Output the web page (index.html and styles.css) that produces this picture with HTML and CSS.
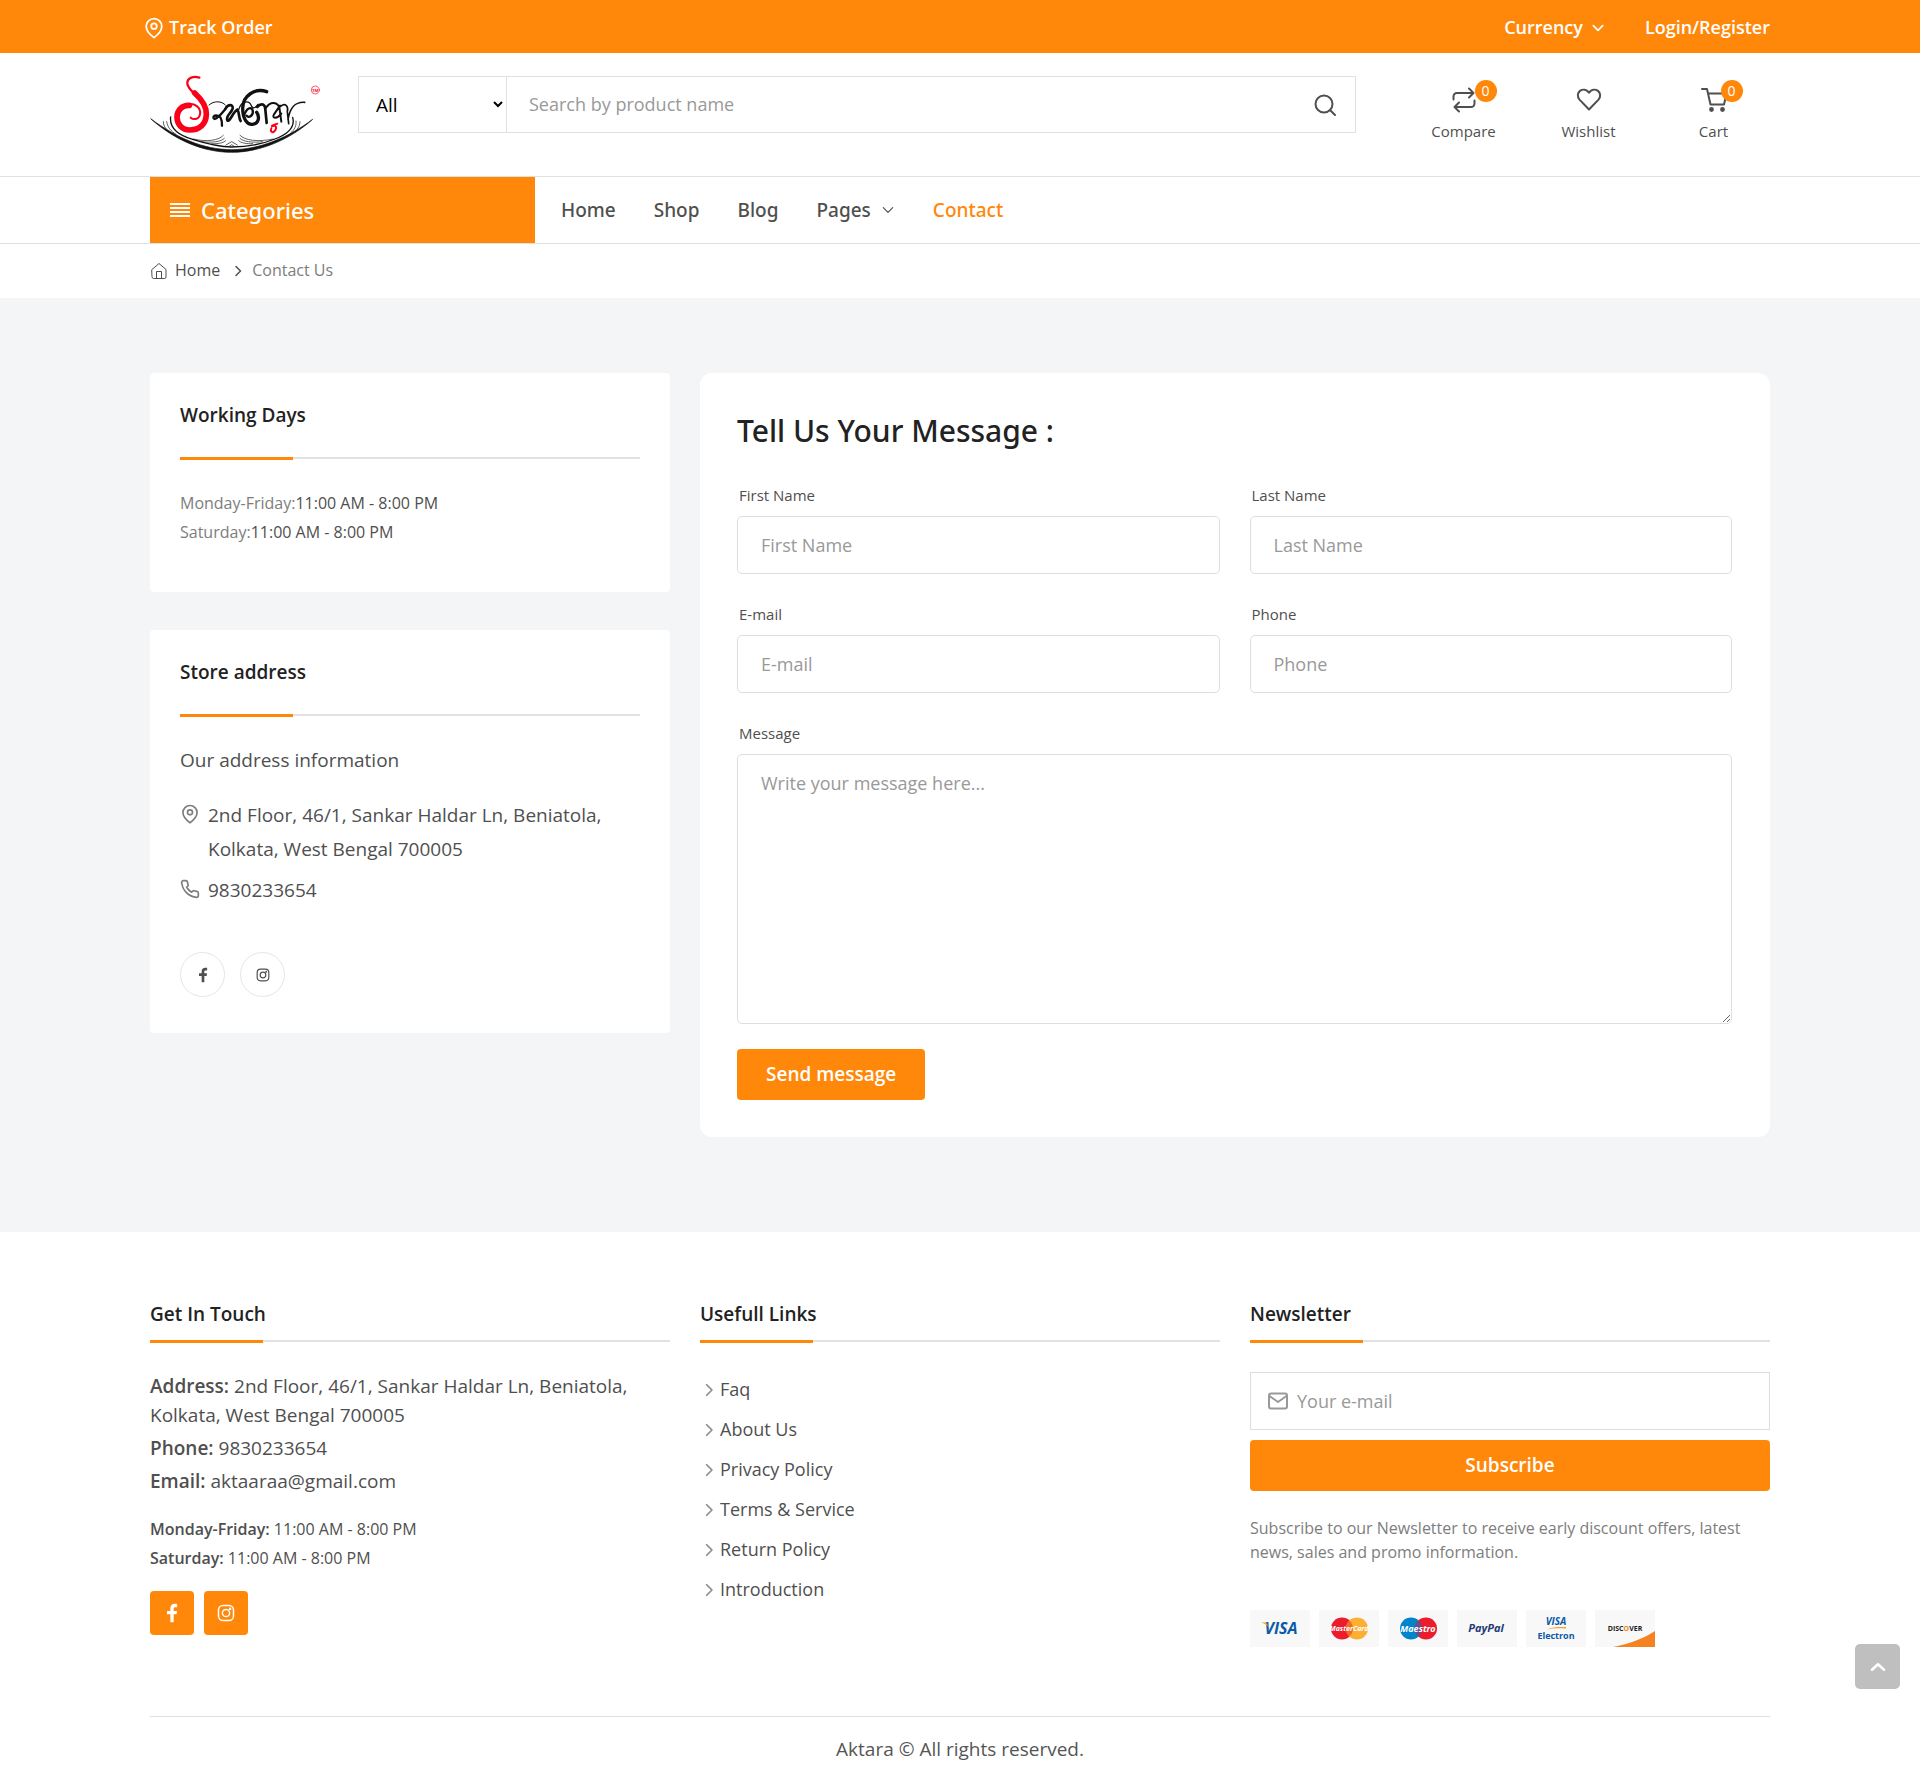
FILE: index.html
```html
<!DOCTYPE html>
<html lang="en">
<head>
<meta charset="utf-8">
<meta name="viewport" content="width=device-width, initial-scale=1">
<title>Contact Us - Aktara</title>
<link rel="stylesheet" href="styles.css">
</head>
<body>
<svg class="sprite" aria-hidden="true">
  <symbol id="pin" viewBox="0 0 24 24"><path d="M20.500 10.300c0 6-8.500 12.200-8.500 12.200S3.500 16.300 3.500 10.300a8.500 8.500 0 0 1 17 0z"/><circle cx="12" cy="10" r="3"/></symbol>
  <symbol id="down" viewBox="0 0 24 24"><path d="M4 8l8 8 8-8"/></symbol>
  <symbol id="right" viewBox="0 0 24 24"><path d="M8 3l9 9-9 9"/></symbol>
  <symbol id="facebook" viewBox="0 0 24 24"><path d="M14 23v-9.500h3.500l.5-4h-4V7.200c0-1.300.5-2 2-2h2.200V1.300C17.800 1.200 16.700 1 15.300 1 12 1 10 3 10 6.500v3H6v4h4V23z"/></symbol>
  <symbol id="instagram" viewBox="0 0 24 24"><rect x="2" y="2" width="20" height="20" rx="6"/><circle cx="12" cy="12" r="4.800"/><circle cx="17.500" cy="6.500" r=".7"/></symbol>
</svg>

<div class="topbar">
  <div class="wrap topbar-row">
    <a class="topbar-link" href="#"><svg class="icon icon-22"><use href="#pin"/></svg>Track Order</a>
    <div class="topbar-right">
      <button class="topbar-link currency" type="button">Currency <svg class="icon icon-14"><use href="#down"/></svg></button>
      <a class="topbar-link" href="#">Login/Register</a>
    </div>
  </div>
</div>

<header class="header">
  <div class="wrap header-row">
    <a class="logo" href="#" aria-label="Aktara">
      <svg viewBox="30 30 516 240">
        <g fill="none" stroke="#111" stroke-linecap="round">
          <path d="M33 162C105 226 190 262 275 262C360 262 450 224 518 163C448 216 360 254 275 254C190 254 110 218 33 162z" fill="#111" stroke-width="2"/>
          <path d="M92 156C88 188 112 210 160 224C205 238 240 246 275 246C320 246 370 236 405 222C448 206 466 186 458 157" stroke-width="4"/>
          <path d="M80 170C82 186 92 198 108 208M70 170c0 10 5 20 12 25M468 168c2 14-4 26-16 36M480 170c0 10-4 18-9 23" stroke-width="2"/>
          <path d="M160 222C200 232 238 226 250 211M185 230c30 4 60 0 68-10M215 236c18 1 36-2 42-9M400 222C352 232 314 226 300 211M368 230c-30 4-60 0-68-10M338 236c-18 1-36-2-42-9M258 240l17-10 17 10M268 244l7-5 7 5" stroke-width="2"/>
          <path d="M207 120C222 106 246 108 256 120" stroke-width="3"/>
          <path d="M246 182C246 166 242 152 232 152C222 150 216 158 224 162C236 158 246 144 256 132" stroke-width="7"/>
          <path d="M256 132C264 116 280 118 278 130C274 146 256 152 262 166C270 172 278 142 292 134C298 140 296 160 302 168" stroke-width="8"/>
          <path d="M296 134C304 108 326 104 334 122C340 136 350 124 354 118" stroke-width="4"/>
          <path d="M380 80C345 68 308 92 308 130C308 162 322 180 338 178C356 176 360 156 350 142" stroke-width="10"/>
          <path d="M312 152C320 128 334 124 338 136C342 150 326 162 320 152" stroke-width="7"/>
          <path d="M352 126C364 112 376 118 376 134L380 174" stroke-width="8"/>
          <path d="M378 128C392 110 408 110 418 126L424 170M420 122L402 148C394 162 412 162 424 146" stroke-width="6"/>
          <path d="M422 124C436 112 446 124 442 140L446 176M444 164C450 128 464 110 494 112" stroke-width="5"/>
        </g>
        <g fill="none" stroke="#fb0018" stroke-linecap="round">
          <path d="M178 38C162 32 141 38 142 56C144 72 160 82 176 98" stroke-width="7"/>
          <path d="M164 84C188 106 200 126 199 148C198 178 178 195 150 195C126 195 111 178 111 156C111 134 128 120 148 121" stroke-width="17"/>
          <path d="M140 119C164 112 184 128 180 148C178 162 162 166 152 158" stroke-width="6"/>
          <path d="M396 184C408 178 412 188 404 198C396 206 390 198 394 190M396 182l16-6" stroke-width="6"/>
          <circle cx="526" cy="75" r="12" stroke-width="2"/>
        </g>
        <text x="526" y="80" class="logo-tm">TM</text>
      </svg>
    </a>
    <form class="search">
      <select class="search-cat" aria-label="Category"><option>All</option></select>
      <input class="search-input" type="text" placeholder="Search by product name" aria-label="Search by product name">
      <button class="search-btn" type="button" aria-label="Search"><svg class="icon icon-24" viewBox="0 0 24 24"><circle cx="11" cy="11" r="8.500"/><path d="M17.200 17.200L22 22"/></svg></button>
    </form>
    <div class="actions">
      <a class="action" href="#"><span class="action-icon"><svg class="icon icon-26" viewBox="0 0 26 26"><path d="M2.500 12.500V9.500a3.500 3.500 0 0 1 3.500-3.500H22M18 1.500L22.500 6 18 10.500M23.500 13.500v3a3.500 3.500 0 0 1-3.500 3.500H4M8 15.500L3.500 20 8 24.500"/></svg><span class="badge">0</span></span>Compare</a>
      <a class="action" href="#"><span class="action-icon"><svg class="icon icon-26" viewBox="0 0 26 26"><path d="M13 22.500L3.500 12.600C1 9.800 1.500 5.800 4 3.900c2.800-2 6.600-1.400 9 1.700 2.400-3.100 6.200-3.700 9-1.700 2.500 1.900 3 5.900.5 8.700z"/></svg></span>Wishlist</a>
      <a class="action" href="#"><span class="action-icon"><svg class="icon icon-26" viewBox="0 0 26 26"><path d="M1 2h5l3.500 15.500h13.500L25.500 6.500H7.500"/><circle cx="10.500" cy="22.500" r="1.400" fill="currentColor"/><circle cx="21.500" cy="22.500" r="1.400" fill="currentColor"/></svg><span class="badge badge-cart">0</span></span>Cart</a>
    </div>
  </div>
</header>

<nav class="nav">
  <div class="wrap nav-row">
    <button class="categories" type="button"><svg class="icon" width="20" height="16" viewBox="0 0 20 16"><path d="M0 2h20M0 6h20M0 10h20M0 14h20"/></svg>Categories</button>
    <ul class="menu">
      <li><a href="#">Home</a></li>
      <li><a href="#">Shop</a></li>
      <li><a href="#">Blog</a></li>
      <li><a href="#">Pages <svg class="icon icon-14"><use href="#down"/></svg></a></li>
      <li><a class="active" href="#">Contact</a></li>
    </ul>
  </div>
</nav>

<div class="wrap crumbs">
  <a class="crumb-home" href="#"><svg class="icon icon-18" viewBox="0 0 18 18"><path d="M2 7.500L9 1.500l7 6V15a1.500 1.500 0 0 1-1.500 1.500h-11A1.500 1.500 0 0 1 2 15zM6.500 16.500V9.500h5v7"/></svg>Home</a>
  <svg class="icon crumb-sep"><use href="#right"/></svg>
  <span class="crumb-here">Contact Us</span>
</div>

<main class="main">
  <div class="wrap columns">
    <aside class="side">
      <section class="card">
        <h2 class="title card-title">Working Days</h2>
        <p class="hours"><span class="muted">Monday-Friday:</span>11:00 AM - 8:00 PM</p>
        <p class="hours"><span class="muted">Saturday:</span>11:00 AM - 8:00 PM</p>
      </section>
      <section class="card store">
        <h2 class="title card-title">Store address</h2>
        <p class="intro">Our address information</p>
        <p class="contact-line"><svg class="icon icon-20"><use href="#pin"/></svg><span>2nd Floor, 46/1, Sankar Haldar Ln, Beniatola, Kolkata, West Bengal 700005</span></p>
        <p class="contact-line"><svg class="icon icon-20" viewBox="0 0 24 24"><path d="M22 17v3a2 2 0 0 1-2.200 2A19.800 19.800 0 0 1 2 4.200 2 2 0 0 1 4 2h3a2 2 0 0 1 2 1.700c.1 1 .4 1.900.7 2.800a2 2 0 0 1-.5 2.100L8 9.900a16 16 0 0 0 6 6l1.300-1.300a2 2 0 0 1 2.100-.4c.9.3 1.800.6 2.800.7A2 2 0 0 1 22 17z"/></svg><span>9830233654</span></p>
        <div class="rounds">
          <a class="round" href="#" aria-label="Facebook"><svg class="solid icon-16"><use href="#facebook"/></svg></a>
          <a class="round" href="#" aria-label="Instagram"><svg class="icon icon-14"><use href="#instagram"/></svg></a>
        </div>
      </section>
    </aside>

    <form class="form">
      <h1 class="form-title">Tell Us Your Message :</h1>
      <div class="fields">
        <div class="field"><label for="first">First Name</label><input id="first" type="text" placeholder="First Name"></div>
        <div class="field"><label for="last">Last Name</label><input id="last" type="text" placeholder="Last Name"></div>
        <div class="field"><label for="email">E-mail</label><input id="email" type="email" placeholder="E-mail"></div>
        <div class="field"><label for="phone">Phone</label><input id="phone" type="tel" placeholder="Phone"></div>
        <div class="field wide"><label for="message">Message</label><textarea id="message" placeholder="Write your message here..."></textarea></div>
      </div>
      <button class="btn send" type="button">Send message</button>
    </form>
  </div>
</main>

<footer class="footer">
  <div class="wrap footer-cols">
    <section>
      <h2 class="title">Get In Touch</h2>
      <div class="touch">
        <p><b>Address:</b> 2nd Floor, 46/1, Sankar Haldar Ln, Beniatola, Kolkata, West Bengal 700005</p>
        <p><b>Phone:</b> 9830233654</p>
        <p><b>Email:</b> aktaaraa@gmail.com</p>
      </div>
      <p class="hours"><b>Monday-Friday:</b> 11:00 AM - 8:00 PM</p>
      <p class="hours"><b>Saturday:</b> 11:00 AM - 8:00 PM</p>
      <div class="squares">
        <a class="square" href="#" aria-label="Facebook"><svg class="solid icon-20"><use href="#facebook"/></svg></a>
        <a class="square" href="#" aria-label="Instagram"><svg class="icon icon-18"><use href="#instagram"/></svg></a>
      </div>
    </section>
    <section>
      <h2 class="title">Usefull Links</h2>
      <ul class="links">
        <li><a href="#"><svg class="icon icon-14"><use href="#right"/></svg>Faq</a></li>
        <li><a href="#"><svg class="icon icon-14"><use href="#right"/></svg>About Us</a></li>
        <li><a href="#"><svg class="icon icon-14"><use href="#right"/></svg>Privacy Policy</a></li>
        <li><a href="#"><svg class="icon icon-14"><use href="#right"/></svg>Terms &amp; Service</a></li>
        <li><a href="#"><svg class="icon icon-14"><use href="#right"/></svg>Return Policy</a></li>
        <li><a href="#"><svg class="icon icon-14"><use href="#right"/></svg>Introduction</a></li>
      </ul>
    </section>
    <section>
      <h2 class="title">Newsletter</h2>
      <form class="newsletter">
        <div class="mail-box">
          <svg class="icon icon-20" viewBox="0 0 20 20"><rect x="1" y="2.500" width="18" height="15" rx="2"/><path d="M1.500 5L10 11l8.500-6"/></svg>
          <input type="email" placeholder="Your e-mail" aria-label="Your e-mail">
        </div>
        <button class="btn" type="button">Subscribe</button>
      </form>
      <p class="note">Subscribe to our Newsletter to receive early discount offers, latest news, sales and promo information.</p>
      <div class="pays">
        <svg class="pay" viewBox="0 0 60 37" role="img"><text class="visa" x="31" y="24" font-size="16">VISA</text><path d="M11 12.500h5l4 6c-2-3-5-5-9-6z" fill="#f7a11a"/></svg>
        <svg class="pay" viewBox="0 0 60 37" role="img"><circle cx="23" cy="18.500" r="11" fill="#ea1c2d"/><circle cx="38" cy="18.500" r="11" fill="#fbb034"/><path d="M30.500 10.500a11 11 0 0 1 0 16 11 11 0 0 1 0-16z" fill="#f26a26"/><text class="mc" x="30" y="21" font-size="7">MasterCard</text></svg>
        <svg class="pay" viewBox="0 0 60 37" role="img"><circle cx="23" cy="18.500" r="11" fill="#0085ca"/><circle cx="38" cy="18.500" r="11" fill="#ea1c2d"/><path d="M30.500 10.500a11 11 0 0 1 0 16 11 11 0 0 1 0-16z" fill="#6b4c8c"/><text class="mc" x="30" y="22" font-size="9">Maestro</text></svg>
        <svg class="pay" viewBox="0 0 60 37" role="img"><text class="paypal" x="29" y="22" font-size="11">PayPal</text></svg>
        <svg class="pay" viewBox="0 0 60 37" role="img"><text class="visa" x="30" y="15" font-size="10">VISA</text><path d="M21 19.500c6-3 12-2.500 19-2.500v1.500c-7-.5-13-.5-19 1z" fill="#f7a11a"/><text class="electron" x="30" y="29" font-size="9">Electron</text></svg>
        <svg class="pay" viewBox="0 0 60 37" role="img"><path d="M18 37C34 34 50 28 60 21v16z" fill="#f58220"/><text class="discover" x="30" y="21" font-size="7">DISC<tspan fill="#f58220">O</tspan>VER</text></svg>
      </div>
    </section>
  </div>
  <div class="wrap"><p class="copyright">Aktara © All rights reserved.</p></div>
</footer>

<button class="to-top" type="button" aria-label="Back to top"><svg class="icon icon-16" viewBox="0 0 24 24"><path d="M3 16l9-8 9 8"/></svg></button>
</body>
</html>
```
FILE: styles.css
```css
*, *::before, *::after { box-sizing: border-box; }
:root {
  --accent: #ff8709;
  --ink: #4f4f4f;
  --dark: #222;
  --muted: #7d7d7d;
  --line: #e1e1e1;
  --medium: "Noto Sans", "Open Sans", sans-serif;
}
body {
  margin: 0;
  font: 400 19px/29px "Open Sans", sans-serif;
  color: var(--ink);
  background: #fff;
}
h1, h2, p, ul { margin: 0; padding: 0; }
ul { list-style: none; }
a { color: inherit; text-decoration: none; }
button, input, select, textarea { font: inherit; color: inherit; margin: 0; }
button { border: 0; background: none; padding: 0; cursor: pointer; }
svg { display: block; flex: none; }
b { font-weight: 600; }
.sprite { display: none; }

.wrap { max-width: 1650px; margin: 0 auto; padding: 0 15px; }
.icon { fill: none; stroke: currentColor; stroke-width: 2; stroke-linecap: round; stroke-linejoin: round; }
.solid { fill: currentColor; }
.icon-14 { width: 14px; height: 14px; }
.icon-16 { width: 16px; height: 16px; }
.icon-18 { width: 18px; height: 18px; }
.icon-20 { width: 20px; height: 20px; }
.icon-22 { width: 22px; height: 22px; }
.icon-24 { width: 24px; height: 24px; }
.icon-26 { width: 26px; height: 26px; }

.topbar { background: var(--accent); color: #fff; font-size: 18px; font-weight: 600; }
.topbar-row { display: flex; justify-content: space-between; padding: 13px 15px 11px 8px; }
.topbar-right { display: flex; gap: 40px; }
.topbar-link { display: flex; align-items: center; gap: 4px; }
.currency { gap: 8px; }
.currency .icon { stroke-width: 3; }

.header-row { display: flex; align-items: flex-start; padding-top: 22px; padding-bottom: 21px; }
.logo { width: 208px; }
.logo svg { width: 172px; height: 80px; }
.logo-tm { font: 700 12px "Open Sans", sans-serif; fill: #fb0018; text-anchor: middle; }
.search { flex: 1; display: flex; height: 57px; margin-top: 1px; border: 1px solid var(--line); }
.search-cat { width: 148px; padding: 0 0 0 13px; border: 0; border-right: 1px solid var(--line); background: #fff; color: #000; }
.search-input { flex: 1; min-width: 0; border: 0; padding: 0 22px; font-size: 18px; }
.search-btn { width: 60px; display: grid; place-items: center; }
.actions { display: flex; gap: 12px; margin-left: 51px; padding-top: 12px; }
.action { width: 113px; display: flex; flex-direction: column; align-items: center; gap: 8px; font-size: 15px; line-height: 20px; }
.action-icon { position: relative; }
.badge { position: absolute; left: 24px; top: -7px; width: 22px; height: 22px; border-radius: 50%; background: var(--accent); color: #fff; font-size: 14px; line-height: 22px; text-align: center; }
.badge-cart { left: 20px; }
::placeholder { color: #999; opacity: 1; }

.nav { border-top: 1px solid var(--line); border-bottom: 1px solid var(--line); }
.nav-row { display: flex; gap: 26px; }
.categories { width: 385px; height: 66px; padding: 0 20px; display: flex; align-items: center; gap: 11px; background: var(--accent); color: #fff; font-family: var(--medium); font-size: 22px; font-weight: 500; }
.menu { display: flex; align-items: center; gap: 38px; font-family: var(--medium); font-weight: 500; }
.menu a { display: flex; align-items: center; gap: 10px; }
.active { color: var(--accent); }

.crumbs { display: flex; align-items: center; padding-top: 12px; padding-bottom: 13px; font-size: 16px; }
.crumb-home { display: flex; align-items: center; gap: 7px; }
.crumb-home .icon { stroke-width: 1; }
.crumb-sep { width: 12px; height: 12px; margin: 0 8px 0 12px; stroke-width: 3; }
.crumb-here { color: var(--muted); }

.main { background: #f3f5f7; padding: 75px 0 95px; }
.columns { display: grid; grid-template-columns: 520fr 1070fr; gap: 30px; align-items: start; }
.side { display: grid; gap: 38px; }
.card { background: #fff; border-radius: 4px; padding: 28px 30px 45px; }
.title { position: relative; font-size: 19px; line-height: 29px; font-weight: 600; color: var(--dark); border-bottom: 2px solid var(--line); padding-bottom: 11px; }
.title::after { content: ""; position: absolute; left: 0; top: 100%; width: 113px; height: 3px; background: var(--accent); }
.card-title { padding-bottom: 27px; margin-bottom: 30px; }
.hours { font-size: 16px; line-height: 29px; }
.muted { color: var(--muted); }
.store { padding-bottom: 36px; }
.intro { margin-bottom: 23px; }
.contact-line { display: flex; gap: 8px; line-height: 34px; margin-bottom: 7px; }
.contact-line .icon { margin-top: 6px; color: var(--muted); }
.rounds { display: flex; gap: 15px; margin-top: 45px; }
.round { width: 45px; height: 45px; border: 1px solid #e6e6e6; border-radius: 50%; display: grid; place-items: center; }

.form { background: #fff; border-radius: 12px; padding: 37px 38px 37px 37px; }
.form-title { font-family: var(--medium); font-size: 30px; line-height: 42px; font-weight: 500; color: var(--dark); margin-bottom: 32px; }
.fields { display: grid; grid-template-columns: 1fr 1fr; gap: 29px 30px; }
.field { display: flex; flex-direction: column; gap: 10px; }
.wide { grid-column: 1 / -1; }
.field label { font-size: 15px; line-height: 22px; padding-left: 2px; }
.field input, .field textarea { display: block; width: 100%; border: 1px solid #dedede; border-radius: 5px; background: #fff; padding: 14px 23px; font-size: 18px; line-height: 28px; }
.field input { height: 58px; }
.field textarea { height: 270px; }
.btn { height: 51px; border-radius: 4px; background: var(--accent); color: #fff; font-weight: 600; }
.send { margin-top: 25px; padding: 0 29px; }

.footer { padding-top: 68px; }
.footer-cols { display: grid; grid-template-columns: repeat(3, 1fr); gap: 30px; padding-bottom: 69px; }
.touch { margin: 30px 0 19px; display: grid; gap: 4px; }
.squares { display: flex; gap: 10px; margin-top: 18px; }
.square { width: 44px; height: 44px; border-radius: 4px; background: var(--accent); color: #fff; display: grid; place-items: center; }
.links { margin-top: 33px; display: grid; gap: 11px; font-size: 18px; }
.links a { display: flex; align-items: center; gap: 4px; padding-left: 2px; }
.links .icon { color: #8d8d8d; stroke-width: 3; }
.newsletter { margin-top: 30px; display: grid; gap: 10px; }
.mail-box { display: flex; align-items: center; gap: 9px; height: 58px; padding: 0 17px; border: 1px solid #dedede; }
.mail-box .icon { color: #999; }
.mail-box input { flex: 1; min-width: 0; border: 0; padding: 0; font-size: 18px; outline-offset: 4px; }
.note { margin: 25px 0 46px; font-size: 16px; line-height: 24px; color: var(--muted); }
.pays { display: flex; gap: 9px; }
.pay { width: 60px; height: 37px; background: #f8f8f8; }
.pay text { font-family: "Open Sans", sans-serif; font-weight: 700; text-anchor: middle; }
.visa { fill: #0a5ba7; font-style: italic; }
.mc { fill: #fff; font-style: italic; }
.paypal { fill: #1f3b75; font-style: italic; }
.electron { fill: #0a5ba7; }
.discover { fill: #222; }
.copyright { border-top: 1px solid var(--line); padding: 18px 0; text-align: center; color: #555; }

.to-top { position: fixed; right: 20px; bottom: 92px; width: 45px; height: 45px; border-radius: 5px; background: #bfbfbf; color: #fff; display: grid; place-items: center; }
.to-top .icon { stroke-width: 4; }
```
